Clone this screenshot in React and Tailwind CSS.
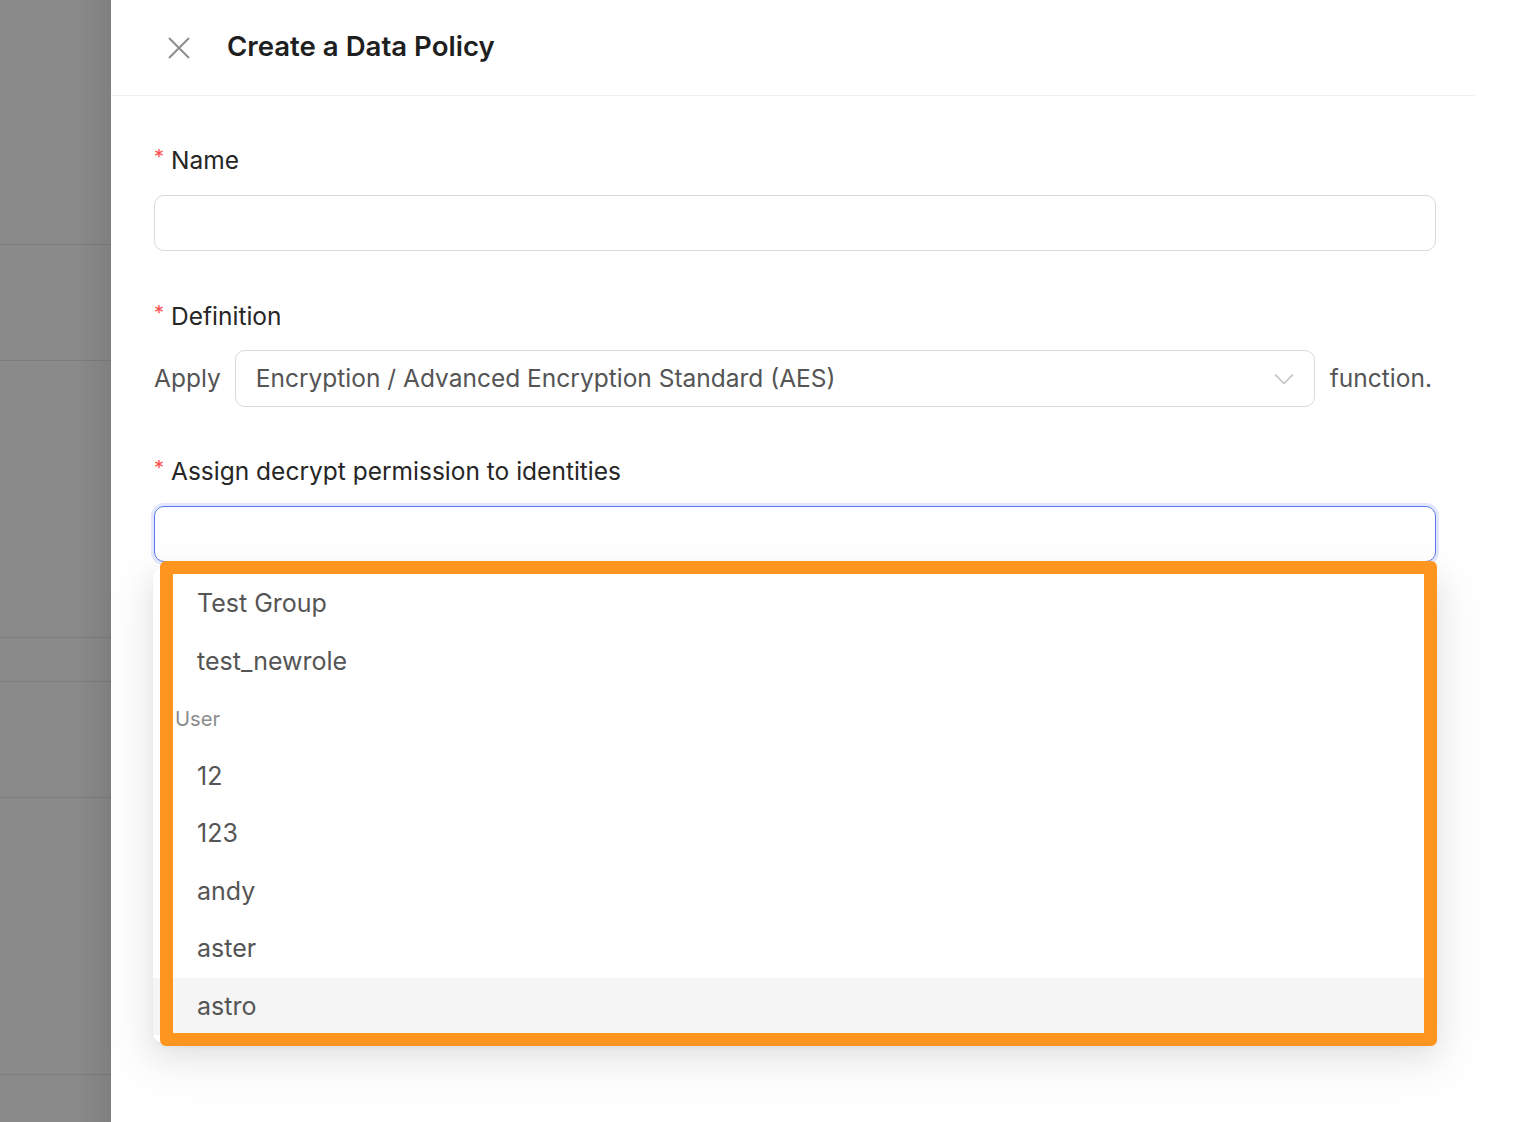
import React from "react";

const rows = [245, 116, 277, 44, 116, 277];

function Label({ children }) {
  return (
    <div className="flex items-center h-[40px] text-[24.5px] text-[#262626] leading-none">
      <span className="text-[#ff4d4f] text-[20px] mr-[7px] -mt-[6px]">*</span>
      <span>{children}</span>
    </div>
  );
}

const groupItems = ["Test Group", "test_newrole"];
const userItems = ["12", "123", "andy", "aster", "astro"];

export default function App() {
  return (
    <div className="flex h-[1122px] w-[1516px] overflow-hidden bg-white font-['Inter',sans-serif]">
      {/* background page with mask */}
      <div className="relative w-[111px] shrink-0 bg-[#8a8a8a] flex flex-col">
        {rows.map((h, i) => (
          <div key={i} style={{ height: h }} className="border-b border-[#7d7d7d] shrink-0" />
        ))}
        <div className="absolute inset-y-0 right-0 w-[36px] bg-gradient-to-r from-transparent to-[rgba(0,0,0,0.08)]" />
      </div>

      {/* drawer */}
      <div className="flex-1 flex flex-col">
        <div className="h-[96px] w-[1364px] border-b border-[#f0f0f0] flex items-center pl-[57px] shrink-0">
          <svg width="22" height="22" viewBox="0 0 22 22" className="shrink-0">
            <path d="M1 1L21 21M21 1L1 21" stroke="#8c8c8c" strokeWidth="2" fill="none" />
          </svg>
          <div className="ml-[37px] text-[27.6px] font-semibold text-[#1f1f1f] leading-none -mt-[1px]">
            Create a Data Policy
          </div>
        </div>

        <div className="pl-[43px] pt-[44px] w-[1325px]">
          <Label>Name</Label>
          <div className="mt-[15px] h-[56px] w-[1282px] rounded-[10px] border border-[#d9d9d9]" />

          <div className="mt-[45px]">
            <Label>Definition</Label>
          </div>
          <div className="mt-[14px] flex items-center w-[1282px]">
            <span className="text-[24.5px] text-[#555] leading-none">Apply</span>
            <div className="ml-[14px] h-[57px] w-[1080px] rounded-[10px] border border-[#d9d9d9] flex items-center pl-[20px] pr-[20px]">
              <span className="flex-1 text-[24.5px] text-[#555] leading-none">
                Encryption / Advanced Encryption Standard (AES)
              </span>
              <svg width="20" height="12" viewBox="0 0 20 12" className="shrink-0">
                <path d="M1 1.5L10 10.5L19 1.5" stroke="#bfbfbf" strokeWidth="1.5" fill="none" />
              </svg>
            </div>
            <span className="ml-[15px] text-[24.5px] text-[#555] leading-none">function.</span>
          </div>

          <div className="mt-[44px]">
            <Label>Assign decrypt permission to identities</Label>
          </div>
          <div className="relative mt-[15px] w-[1282px]">
            <div className="h-[56px] rounded-[10px] border border-[#5b78f2] shadow-[0_0_0_3px_#e2e7fd]" />

            {/* dropdown */}
            <div className="absolute left-[-1px] top-[62px] w-[1284px] bg-white rounded-[10px] pt-[7px] pb-[8px] shadow-[0_10px_28px_0_rgba(0,0,0,0.08),0_5px_10px_-6px_rgba(0,0,0,0.12),0_16px_48px_14px_rgba(0,0,0,0.05)]">
              {groupItems.map((t) => (
                <div key={t} className="h-[57.5px] flex items-center pl-[44px] text-[25px] text-[#555] leading-none">
                  {t}
                </div>
              ))}
              <div className="h-[57.5px] flex items-center pl-[22px] text-[20.3px] text-[#8c8c8c] leading-none">
                User
              </div>
              {userItems.map((t) => (
                <div
                  key={t}
                  className={
                    "h-[57.5px] flex items-center pl-[44px] text-[25px] text-[#555] leading-none " +
                    (t === "astro" ? "bg-[#f5f5f5]" : "")
                  }
                >
                  {t}
                </div>
              ))}
            </div>

            {/* annotation highlight */}
            <div className="absolute left-[6px] top-[55px] w-[1277px] h-[485px] border-[13px] border-[#fe951f] rounded-[6px] pointer-events-none" />
          </div>
        </div>
      </div>
    </div>
  );
}
